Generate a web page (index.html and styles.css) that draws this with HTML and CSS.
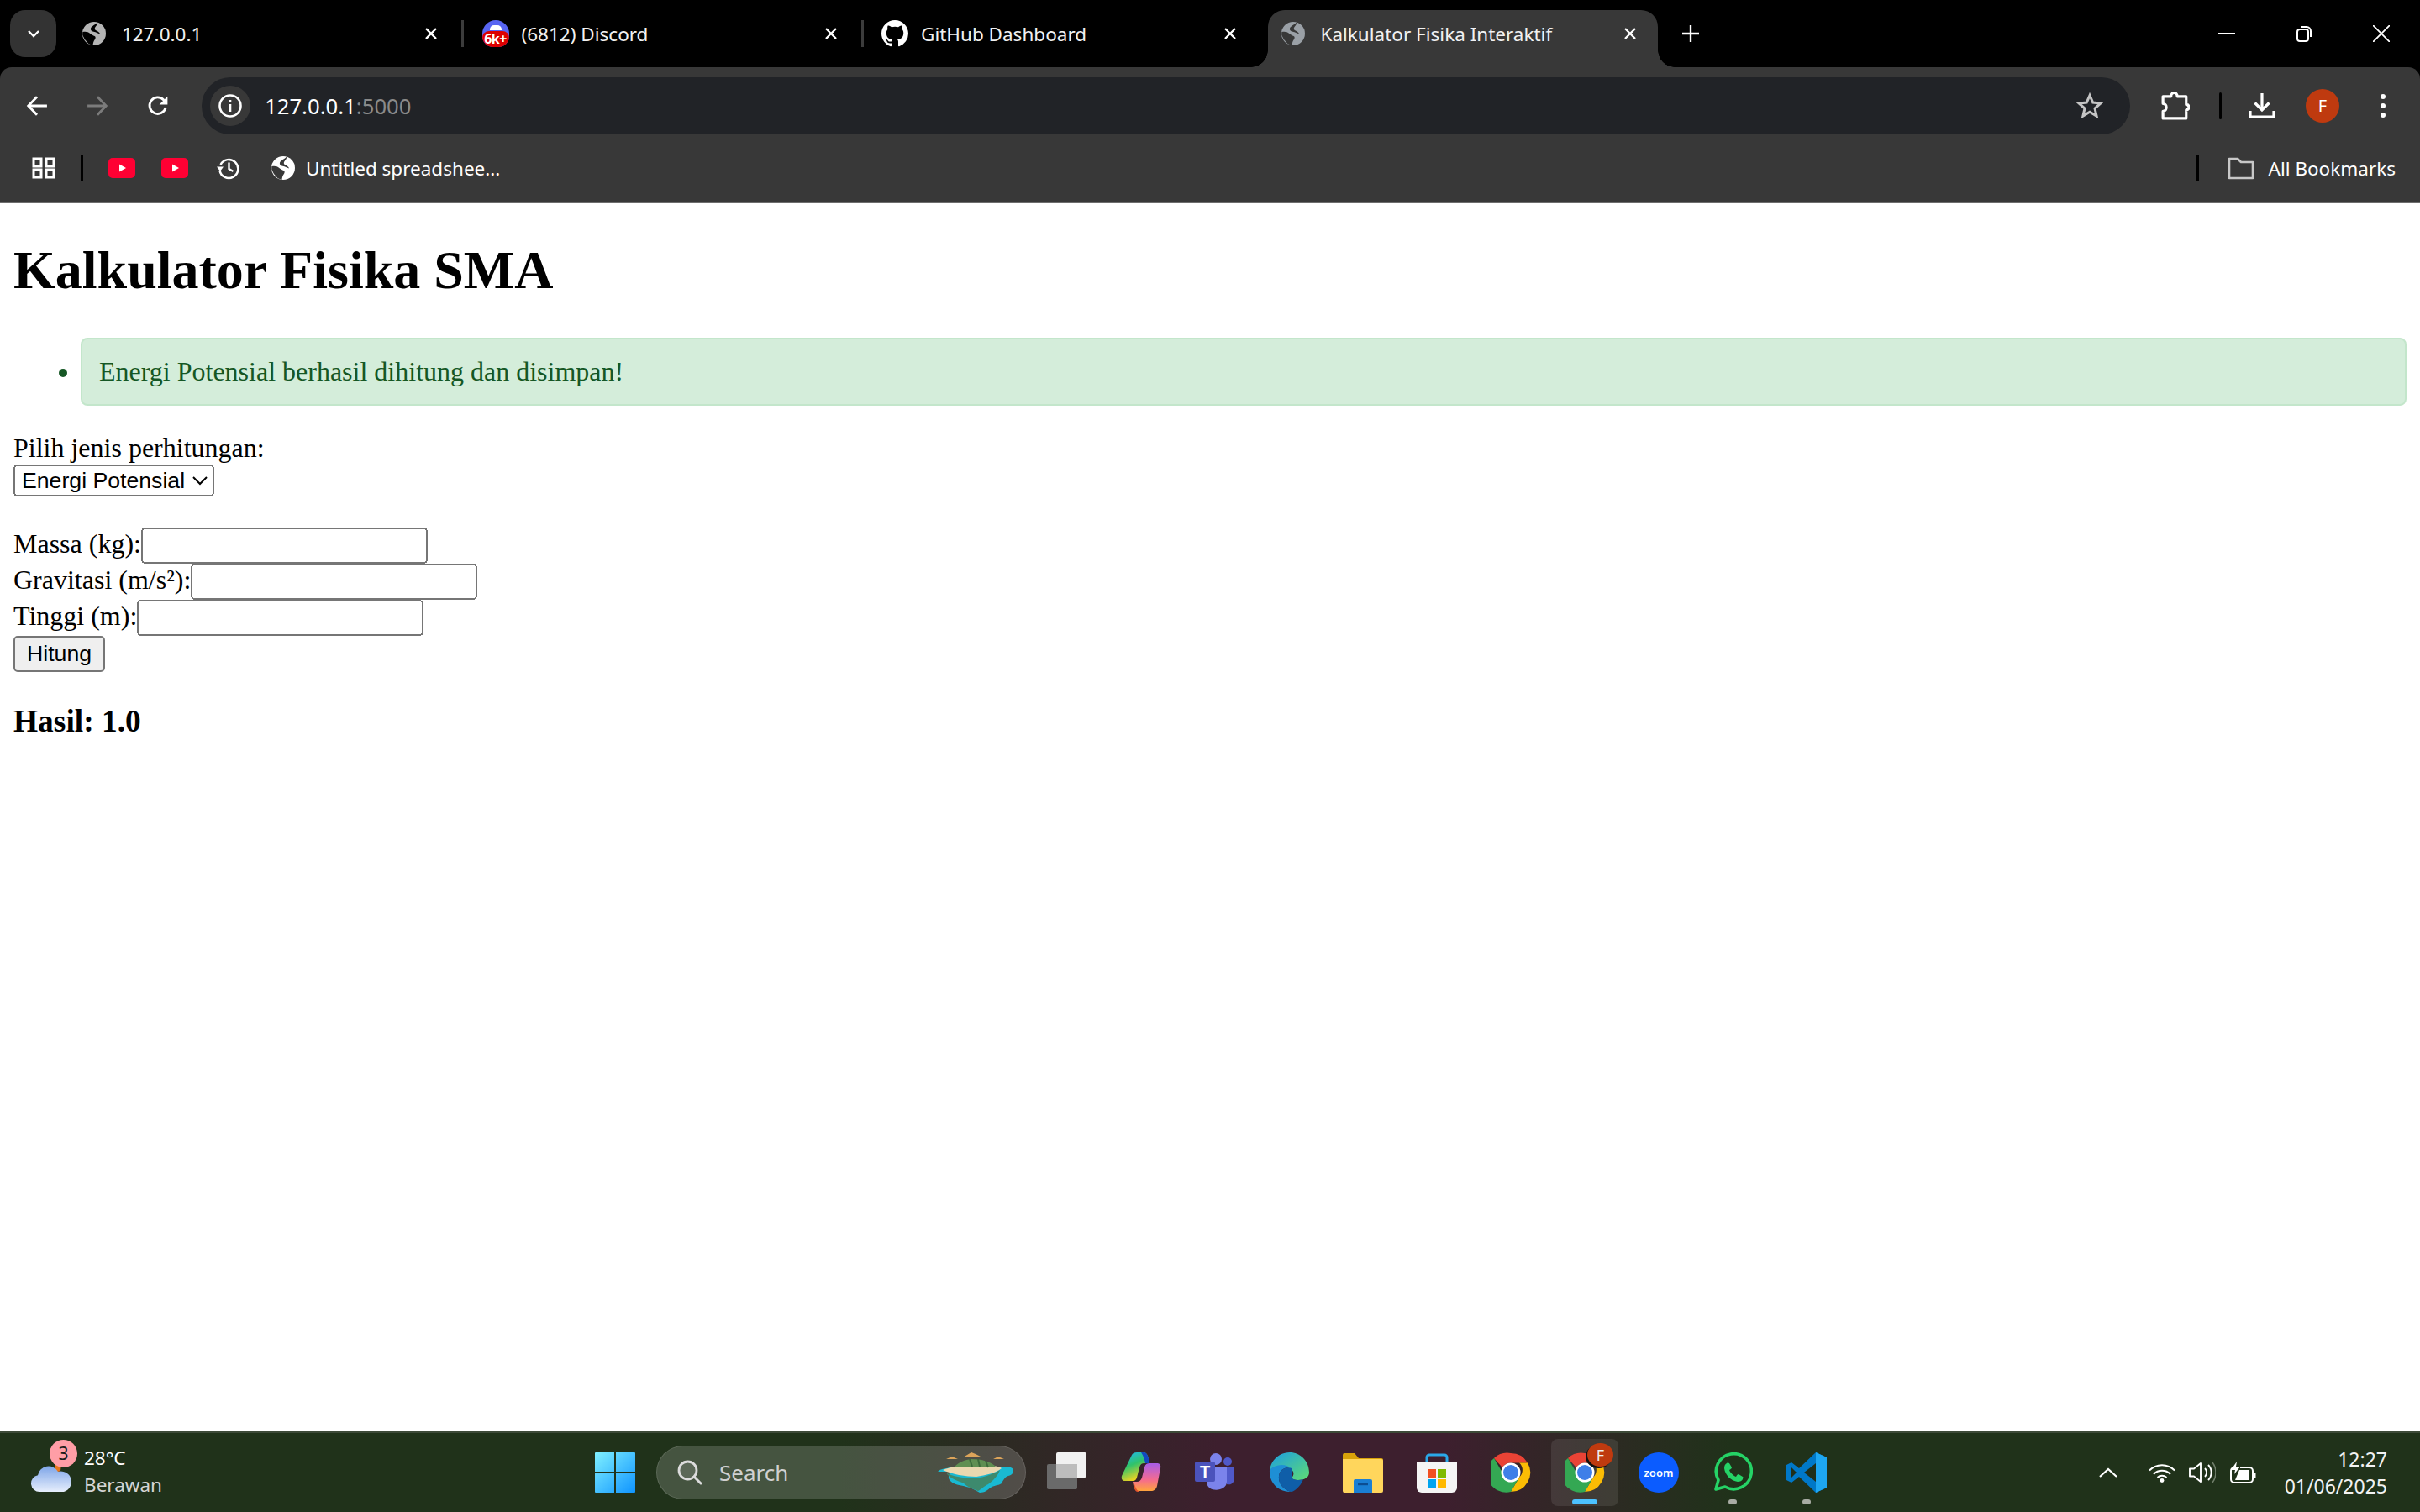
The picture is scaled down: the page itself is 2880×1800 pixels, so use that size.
FILE: index.html
```html
<!DOCTYPE html>
<html lang="en">
<head>
	<meta charset="UTF-8">
	<title>Kalkulator Fisika Interaktif</title>
	<link rel="stylesheet" href="styles.css">
</head>
<body>
	<svg class="defs" width="0" height="0">
		<symbol id="globe" viewBox="0 0 24 24">
			<circle cx="12" cy="12" r="12" fill="currentColor"/>
			<path class="land" d="M15.500.4C13.500 3 9.500 4 8.600 6.500c-.6 1.800.6 3.200 3 3.600 2.500.4 4 1.600 6.500 2.400-.5-2.200-3-3-4.500-4-1.500-1-1-2.500.2-4 1-1.300 2-2.500 1.700-4.100zM.2 10.500c3-.8 5.800-.2 7.800 1.500 1.500 1.300 3 2 4.500 2.500 1.500.7 1 2.500 0 4-1 1.300-1.500 3-1.800 5.500l-4.200-1.500-4-4.500-2.300-4.500z"/>
		</symbol>
		<symbol id="close" viewBox="0 0 16 16">
			<path d="M2 2l12 12M14 2L2 14" fill="none" stroke="currentColor" stroke-width="2.400"/>
		</symbol>
		<symbol id="yt" viewBox="0 0 32 24">
			<rect width="32" height="24" rx="5" fill="#ff0033"/>
			<path d="M13 7.500l8 4.500-8 4.500z" fill="#fff"/>
		</symbol>
		<symbol id="chrome" viewBox="0 0 48 48">
			<path d="M24 1a23 23 0 0 1 20 11.500H24a11.500 11.500 0 0 0-10 5.800L4 6.900A23 23 0 0 1 24 1z" fill="#ea4335"/>
			<path d="M44 12.500A23 23 0 0 1 24 47l10-17.300a11.500 11.500 0 0 0 0-17.200z" fill="#fbbc04"/>
			<path d="M4 6.900l10 17.300A11.500 11.500 0 0 0 34 29.700L24 47A23 23 0 0 1 4 6.900z" fill="#34a853"/>
			<circle cx="24" cy="24" r="11.500" fill="#fff"/>
			<circle cx="24" cy="24" r="9" fill="#3f7fe8"/>
		</symbol>
	</svg>

	<div class="app">
		<header class="browser">
			<div class="tabstrip">
				<button class="tab-search">
					<svg class="chev" viewBox="0 0 16 10"><path d="M2 2l6 6 6-6" fill="none" stroke="#fff" stroke-width="2.400"/></svg>
				</button>
				<div class="tab">
					<span class="fav-slot"><svg class="fav-globe fav-gray"><use href="#globe"/></svg></span>
					<span class="tab-title">127.0.0.1</span>
					<svg class="tab-close"><use href="#close"/></svg>
				</div>
				<div class="tab">
					<span class="discord">
						<span class="discord-top"></span>
						<span class="discord-badge">6k+</span>
					</span>
					<span class="tab-title">(6812) Discord</span>
					<svg class="tab-close"><use href="#close"/></svg>
				</div>
				<div class="tab">
					<svg class="favicon" viewBox="0 0 16 16"><path fill="#fff" d="M8 0C3.580 0 0 3.580 0 8c0 3.540 2.290 6.530 5.470 7.590.4.070.55-.17.55-.38 0-.19-.01-.82-.01-1.490-2.010.37-2.530-.49-2.690-.94-.09-.23-.48-.94-.82-1.130-.28-.15-.68-.52-.01-.53.63-.01 1.080.58 1.230.82.72 1.210 1.870.87 2.330.66.07-.52.28-.87.51-1.070-1.780-.2-3.640-.89-3.640-3.950 0-.87.31-1.590.82-2.150-.08-.2-.36-1.020.08-2.120 0 0 .67-.21 2.200.82.64-.18 1.320-.27 2-.27.68 0 1.360.09 2 .27 1.530-1.040 2.200-.82 2.200-.82.44 1.100.16 1.920.08 2.120.51.56.82 1.270.82 2.150 0 3.070-1.870 3.750-3.650 3.950.29.25.54.73.54 1.480 0 1.070-.01 1.930-.01 2.200 0 .21.15.46.55.38A8.013 8.013 0 0 0 16 8c0-4.420-3.580-8-8-8z"/></svg>
					<span class="tab-title">GitHub Dashboard</span>
					<svg class="tab-close"><use href="#close"/></svg>
				</div>
				<div class="tab active">
					<span class="fav-slot"><svg class="fav-globe fav-blue"><use href="#globe"/></svg></span>
					<span class="tab-title">Kalkulator Fisika Interaktif</span>
					<svg class="tab-close"><use href="#close"/></svg>
				</div>
				<svg class="new-tab" viewBox="0 0 22 22"><path d="M11 0v22M0 11h22" stroke="#fff" stroke-width="2.600"/></svg>
				<div class="win-controls">
					<svg class="win-btn" viewBox="0 0 20 20"><path d="M0 10h20" stroke="#fff" stroke-width="2"/></svg>
					<svg class="win-btn" viewBox="0 0 20 20"><rect x="2" y="5" width="13" height="14" rx="3" fill="none" stroke="#fff" stroke-width="2"/><path d="M6 2h7a5 5 0 0 1 5 5v7" fill="none" stroke="#fff" stroke-width="2"/></svg>
					<svg class="win-btn" viewBox="0 0 20 20"><path d="M0 0l20 20M20 0L0 20" stroke="#fff" stroke-width="1.800"/></svg>
				</div>
			</div>

			<div class="toolbar">
				<span class="tool-btn">
					<svg class="tool-icon" viewBox="0 0 24 24"><path d="M23 12H3M12 2L2.500 12l9.500 10" fill="none" stroke="#fff" stroke-width="2.600"/></svg>
				</span>
				<span class="tool-btn">
					<svg class="tool-icon" viewBox="0 0 24 24"><path d="M1 12h20M12 2l9.500 10L12 22" fill="none" stroke="#7b7b7b" stroke-width="2.600"/></svg>
				</span>
				<span class="tool-btn">
					<svg class="tool-icon" viewBox="0 0 24 24"><path d="M20.500 14a9 9 0 1 1-2.200-8.500L21 8" fill="none" stroke="#fff" stroke-width="2.600"/><path d="M22.500 1.500v9h-9z" fill="#fff"/></svg>
				</span>
				<div class="omnibox">
					<span class="info-chip">
						<svg class="info-icon" viewBox="0 0 28 28"><circle cx="14" cy="14" r="12.500" fill="none" stroke="#fff" stroke-width="2.600"/><path d="M12.700 12h2.600v9h-2.600zM12.700 7h2.600v2.800h-2.600z" fill="#fff"/></svg>
					</span>
					<span class="url">127.0.0.1<span class="url-port">:5000</span></span>
					<svg class="star" viewBox="0 0 32 32"><path d="M16 3.500l3.700 8.600 9.300.8-7 6.100 2.100 9.100-8.100-4.800-8.100 4.800 2.100-9.100-7-6.100 9.300-.8z" fill="none" stroke="#c4c4c4" stroke-width="3"/></svg>
				</div>
				<span class="tool-btn ext-btn">
					<svg class="tool-icon ext-icon" viewBox="0 0 32 32"><path d="M2 5.500h9c0-5.500 7-5.500 7 0h10v9c4 0 4 6 0 6v9.500H2v-8c5 0 5-8.500 0-8.500z" fill="none" stroke="#fff" stroke-width="3" stroke-linejoin="round"/></svg>
				</span>
				<span class="tool-sep"></span>
				<span class="tool-btn dl-btn">
					<svg class="tool-icon dl-icon" viewBox="0 0 32 32"><path d="M16 1v19M7.500 12.500l8.500 8.500 8.500-8.500M2 22v7h28v-7" fill="none" stroke="#fff" stroke-width="3.200"/></svg>
				</span>
				<span class="tool-btn">
					<span class="avatar">F</span>
				</span>
				<span class="tool-btn">
					<svg class="menu-dots" viewBox="0 0 8 30"><circle cx="4" cy="4" r="3" fill="#fff"/><circle cx="4" cy="15" r="3" fill="#fff"/><circle cx="4" cy="26" r="3" fill="#fff"/></svg>
				</span>
			</div>

			<div class="bookmarks">
				<svg class="apps" viewBox="0 0 28 26"><path d="M2 2h9v9H2zM17 2h9v9h-9zM2 15h9v9H2zM17 15h9v9h-9z" fill="none" stroke="#fff" stroke-width="3"/></svg>
				<span class="bm-sep"></span>
				<svg class="yt yt-first"><use href="#yt"/></svg>
				<svg class="yt yt-second"><use href="#yt"/></svg>
				<svg class="history" viewBox="0 0 28 28"><path d="M4.500 10a11 11 0 1 1-1 7" fill="none" stroke="#fff" stroke-width="2.500"/><path d="M0 12.500h8L4 18z" fill="#fff"/><path d="M14.500 7.500v7.500l5 3" fill="none" stroke="#fff" stroke-width="2.400"/></svg>
				<svg class="bm-globe"><use href="#globe"/></svg>
				<span class="bm-title">Untitled spreadshee...</span>
				<span class="bm-sep bm-sep-right"></span>
				<svg class="folder" viewBox="0 0 32 28"><path d="M2 3h10l4 4h14v19H2z" fill="none" stroke="#c8c8c8" stroke-width="2.600" stroke-linejoin="round"/></svg>
				<span class="bm-title bm-all">All Bookmarks</span>
			</div>
		</header>

		<main class="page">
			<h1>Kalkulator Fisika SMA</h1>
			<ul>
				<li class="success">Energi Potensial berhasil dihitung dan disimpan!</li>
			</ul>
			<form>
				<label for="jenis">Pilih jenis perhitungan:</label><br>
				<select id="jenis">
					<option>Energi Potensial</option>
				</select>
				<br><br>
				<label for="massa">Massa (kg):</label><input id="massa" type="text"><br>
				<label for="gravitasi">Gravitasi (m/s²):</label><input id="gravitasi" type="text"><br>
				<label for="tinggi">Tinggi (m):</label><input id="tinggi" type="text"><br>
				<button type="button">Hitung</button>
			</form>
			<h3>Hasil: 1.0</h3>
		</main>

		<footer class="taskbar">
			<div class="weather">
				<span class="weather-icon">
					<svg class="cloud" viewBox="0 0 50 34"><defs><linearGradient id="cl" x1="0" y1="0" x2="0" y2="1"><stop offset="0" stop-color="#7fa6e8"/><stop offset="1" stop-color="#e6eefc"/></linearGradient></defs><path d="M30 0h7l-1 8-6 2z" fill="#e8761c"/><path d="M11 33a10 10 0 0 1-2-19.800A13 13 0 0 1 33 9a11 11 0 0 1 7 24z" fill="url(#cl)"/></svg>
					<span class="weather-badge">3</span>
				</span>
				<span class="weather-text">
					<span class="temp">28°C</span>
					<span class="cond">Berawan</span>
				</span>
			</div>

			<div class="task-center">
				<svg class="win-logo" viewBox="0 0 48 48"><defs><linearGradient id="wl" x1="0" y1="0" x2="1" y2="1"><stop offset="0" stop-color="#7ff0ff"/><stop offset="1" stop-color="#0f94ff"/></linearGradient></defs><path d="M0 1a1 1 0 0 1 1-1h22v23H0zM25 0h22a1 1 0 0 1 1 1v22H25zM0 25h23v23H1a1 1 0 0 1-1-1zM25 25h23v22a1 1 0 0 1-1 1H25z" fill="url(#wl)"/></svg>

				<div class="searchbox">
					<svg class="search-icon" viewBox="0 0 30 30"><circle cx="12.500" cy="12.500" r="10.500" fill="rgba(255,255,255,.12)" stroke="#dcdcdc" stroke-width="2.800"/><path d="M20 20l8 8" stroke="#dcdcdc" stroke-width="3" stroke-linecap="round"/></svg>
					<span class="search-text">Search</span>
					<svg class="island" viewBox="0 0 90 50">
						<path d="M10 9l7-3 7 3zM30 7l10-6 5 2 8 4zM66 9l6-3 7 3z" fill="#dca45a"/>
						<path d="M0 24c4-4 8-3 14-5l62-1c5 1 10-1 14 3 1 5-3 7-6 8-4 1-6 5-8 9-5 3-9 2-13 5-4 3-7 6-13 6-6-3-10-6-16-7-6-2-14-2-19-7-4-4-1-7-1-11z" fill="#19b9d2"/>
						<path d="M10 25c6 5 22 6 28 7 14 0 26-4 36-10-2 6-8 13-14 17-6 3-8 6-12 8-7-3-13-5-17-9-6-3-18-6-21-13z" fill="#3d8a6e"/>
						<path d="M6 22c14-7 62-9 70-2-7 6-19 8-30 10-12 0-30-3-40-8z" fill="#ead8b0"/>
						<path d="M20 18c6-6 12-8 20-9 12 0 24 3 30 10-16-1-36 0-50-1z" fill="#5f8f52"/>
						<path d="M38 9l3 9M48 9l2 9M57 11l3 8" stroke="#3c6b3b" stroke-width="2"/>
					</svg>
				</div>

				<div class="task-icons">
					<span class="task-item">
						<svg class="task-icon" viewBox="0 0 48 48"><rect x="0" y="14" width="36" height="30" rx="2" fill="#6a6a6a"/><rect x="11" y="0" width="36" height="30" rx="2" fill="#f1f1f1"/><path d="M11 14h25v16H11z" fill="#bdbdbd"/></svg>
					</span>
					<span class="task-item">
						<svg class="task-icon" viewBox="0 0 48 48"><defs><linearGradient id="cp1" x1="0" y1="0" x2=".4" y2="1"><stop offset="0" stop-color="#1fb6ff"/><stop offset=".5" stop-color="#2fc36b"/><stop offset="1" stop-color="#f4d320"/></linearGradient><linearGradient id="cp2" x1=".5" y1="0" x2=".5" y2="1"><stop offset="0" stop-color="#a85de8"/><stop offset=".6" stop-color="#f56c8e"/><stop offset="1" stop-color="#ffa53d"/></linearGradient></defs><path d="M13 3c1-2 3-3 6-3h9c3 1 4 4 5 7l1 6h-6c-3 0-5 1-6 5l-3 12c-1 3-3 4-5 4H5c-3 0-5-2-4-6z" fill="url(#cp1)"/><path d="M35 13h8c3 0 5 2 4 6l-4 21c-1 4-4 6-7 6H21c-3 0-5-2-6-6l-1-5h5c3 0 5-2 6-5l3-12c1-4 3-5 7-5z" fill="url(#cp2)"/><path d="M28 0c3 1 4 4 5 7l1 6h-5c-1-4-2-9-5-13z" fill="#1348c0"/><path d="M15 35c2 5 3 10 7 12h-2c-3 0-5-4-5-12z" fill="#e2542e"/></svg>
					</span>
					<span class="task-item">
						<svg class="task-icon" viewBox="0 0 48 48"><circle cx="25" cy="8" r="7" fill="#7b83eb"/><circle cx="39" cy="11" r="5" fill="#5059c9"/><path d="M34 18h13v14a7 7 0 0 1-9 6z" fill="#5059c9"/><path d="M14 18h24v17c0 12-24 14-24 0z" fill="#7b83eb"/><rect x="0" y="11" width="24" height="24" rx="2" fill="#4b53bc"/><text class="teams-t" x="12" y="30">T</text></svg>
					</span>
					<span class="task-item">
						<svg class="task-icon" viewBox="0 0 48 48"><defs><linearGradient id="ed1" x1="0" y1="0" x2="1" y2="1"><stop offset="0" stop-color="#1b9de2"/><stop offset="1" stop-color="#5fdc73"/></linearGradient></defs><path d="M1 21C3 8 13 0 25 0c12 0 23 10 23 24 0 6-6 9-13 9-4 0-8-1-8-3 2-1 3-4 2-7-4-7-20-9-28-2z" fill="url(#ed1)"/><path d="M1 21c7-7 18-8 26-2-8-3-16 3-15 12 0 7 6 14 15 16C12 48 0 37 1 21z" fill="#1e8fd5"/><path d="M12 31c-1-9 7-15 15-12 2 1 1 8 0 11 2 3 8 4 14 2-3 9-12 15-14 15-9-2-15-9-15-16z" fill="#0f5ea8"/></svg>
					</span>
					<span class="task-item">
						<svg class="task-icon" viewBox="0 0 48 48"><path d="M0 3a2 2 0 0 1 2-2h12l5 6h27a2 2 0 0 1 2 2v5H0z" fill="#d8a20a"/><path d="M0 8h46a2 2 0 0 1 2 2v36a2 2 0 0 1-2 2H2a2 2 0 0 1-2-2z" fill="#ffd65c"/><path d="M13 34a2 2 0 0 1 2-2h18a2 2 0 0 1 2 2v14H13z" fill="#1a7fd4"/><path d="M18 38h12" stroke="#0c4d92" stroke-width="2.400"/></svg>
					</span>
					<span class="task-item">
						<svg class="task-icon" viewBox="0 0 48 48"><path d="M12 12V6a3 3 0 0 1 3-3h18a3 3 0 0 1 3 3v6" fill="none" stroke="#2aa8e8" stroke-width="3"/><path d="M0 11h48v31a6 6 0 0 1-6 6H6a6 6 0 0 1-6-6z" fill="#f5f5f5"/><path d="M13 20h10v10H13z" fill="#f25022"/><path d="M25 20h10v10H25z" fill="#7fba00"/><path d="M13 32h10v10H13z" fill="#00a4ef"/><path d="M25 32h10v10H25z" fill="#ffb900"/></svg>
					</span>
					<span class="task-item">
						<svg class="task-icon"><use href="#chrome"/></svg>
					</span>
					<span class="task-item is-active">
						<svg class="task-icon"><use href="#chrome"/></svg>
						<span class="chrome-badge">F</span>
						<span class="indicator"></span>
					</span>
					<span class="task-item">
						<span class="zoom-app">zoom</span>
					</span>
					<span class="task-item has-dot">
						<svg class="task-icon" viewBox="0 0 48 48"><path d="M4 44l3-11A21 21 0 1 1 15 41z" fill="none" stroke="#25d366" stroke-width="3.600" stroke-linejoin="round"/><path d="M17 13c-2 1-3 3-3 6 1 8 8 15 16 16 3 0 5-1 6-3 0-1 1-3 0-3l-5-3c-1 0-2 1-3 3-3-1-7-5-8-8 2-1 3-2 3-3l-3-5c0 0-2-1-3 0z" fill="#25d366"/></svg>
						<span class="dot"></span>
					</span>
					<span class="task-item has-dot">
						<svg class="task-icon" viewBox="0 0 48 48"><path d="M35 0l13 6v36l-13 6-20-19-9 7-6-3V15l6-3 9 7z" fill="#0078c8"/><path d="M35 0l13 6v36l-13 6z" fill="#1ea7f2"/><path d="M6 18l-0 12 6-6z" fill="#1f2f1a"/><path d="M35 13v22L21 24z" fill="#1f2f1a"/></svg>
						<span class="dot"></span>
					</span>
				</div>
			</div>

			<div class="tray">
				<svg class="tray-chev" viewBox="0 0 22 12"><path d="M1 11l10-9 10 9" fill="none" stroke="#fff" stroke-width="2.200"/></svg>
				<svg class="tray-wifi" viewBox="0 0 32 23"><path d="M1 8.500a21 21 0 0 1 30 0M6 13a14 14 0 0 1 20 0M10.500 17a8 8 0 0 1 11 0" fill="none" stroke="#fff" stroke-width="1.900"/><circle cx="16" cy="20.500" r="2.400" fill="#fff"/></svg>
				<svg class="tray-sound" viewBox="0 0 32 26"><path d="M1 8.500h5l8-6.500v22l-8-6.500H1z" fill="none" stroke="#fff" stroke-width="1.900" stroke-linejoin="round"/><path d="M19 8a7 7 0 0 1 0 10M23 4a13 13 0 0 1 0 18" fill="none" stroke="#fff" stroke-width="1.900"/><path d="M28 1a20 20 0 0 1 0 24" fill="none" stroke="#6f7d6a" stroke-width="1.600"/></svg>
				<svg class="tray-batt" viewBox="0 0 32 27"><path d="M9 7H6a4 4 0 0 0-4 4v10a4 4 0 0 0 4 4h18a4 4 0 0 0 4-4V11a4 4 0 0 0-4-4H13" fill="none" stroke="#fff" stroke-width="2"/><path d="M29.500 13h2v6h-2z" fill="#fff"/><path d="M12 10h12v12H7z" fill="#fff"/><path d="M9 0L2 10h5l-1 5 7-9H8z" fill="#fff"/></svg>
				<div class="clock">
					<span>12:27</span>
					<span>01/06/2025</span>
				</div>
			</div>
		</footer>
	</div>
</body>
</html>
```

FILE: styles.css
```css
*{
	box-sizing: border-box;
}
html, body{
	margin: 0;
	padding: 0;
}
.defs{
	position: absolute;
}
.app{
	width: 2880px;
	height: 1800px;
	display: flex;
	flex-direction: column;
	overflow: hidden;
	font-family: "Noto Sans", "Open Sans", sans-serif;
}

/* browser frame */
.browser{
	flex: none;
	background: #000;
	color: #fff;
}
.tabstrip{
	height: 80px;
	display: flex;
	align-items: flex-end;
	padding-left: 12px;
}
.tab-search{
	width: 55px;
	height: 56px;
	margin: 0 15px 12px 0;
	padding: 0;
	border: 0;
	border-radius: 18px;
	background: #333;
	display: flex;
	align-items: center;
	justify-content: center;
}
.chev{
	width: 16px;
	height: 10px;
}
.tab{
	position: relative;
	width: 464px;
	height: 68px;
	margin-right: 11.500px;
	padding: 0 25px 12px 16px;
	display: flex;
	align-items: center;
	border-radius: 20px 20px 0 0;
}
.tab::after{
	content: "";
	position: absolute;
	right: -6px;
	top: 12px;
	width: 3px;
	height: 32px;
	background: #3c3c3c;
}
.tab:nth-of-type(3)::after{
	display: none;
}
.tab.active{
	background: #383838;
	margin-right: 29px;
}
.tab.active::before{
	content: "";
	position: absolute;
	left: -20px;
	bottom: 0;
	width: 20px;
	height: 20px;
	background: radial-gradient(circle at 0 0, transparent 19.500px, #383838 20px);
}
.tab.active::after{
	right: -20px;
	top: auto;
	bottom: 0;
	width: 20px;
	height: 20px;
	background: radial-gradient(circle at 100% 0, transparent 19.500px, #383838 20px);
}
.favicon, .fav-slot{
	width: 32px;
	height: 32px;
	flex: none;
}
.fav-slot{
	display: flex;
	align-items: center;
	justify-content: flex-start;
}
.fav-globe{
	width: 28px;
	height: 28px;
}
.fav-gray{
	color: #b5b5b5;
	--land: #000;
}
.fav-blue{
	color: #9aa0a6;
	--land: #383838;
}
.land{
	fill: var(--land, #383838);
}
.tab-title{
	flex: 1;
	margin-left: 15px;
	font-size: 22.500px;
	white-space: nowrap;
	color: #f1f1f1;
}
.tab-close{
	width: 16px;
	height: 16px;
	flex: none;
	color: #fff;
}
.discord{
	position: relative;
	width: 32px;
	height: 32px;
	flex: none;
	border-radius: 50% 50% 40% 40%;
	overflow: hidden;
	background: #5865f2;
}
.discord-top{
	position: absolute;
	left: 9px;
	top: 6px;
	width: 14px;
	height: 6px;
	border-radius: 5px 5px 0 0;
	background: #fff;
}
.discord-badge{
	position: absolute;
	left: 0;
	right: 0;
	bottom: 0;
	height: 19px;
	background: #dc0000;
	border-radius: 8px;
	font-size: 16px;
	font-weight: 700;
	line-height: 19px;
	text-align: center;
	color: #fff;
	letter-spacing: -.5px;
}
.new-tab{
	width: 20px;
	height: 20px;
	margin: 0 0 30px 0;
	flex: none;
}
.win-controls{
	margin-left: auto;
	display: flex;
	align-items: center;
	height: 80px;
	gap: 72px;
	padding: 0 36px 0 0;
	align-self: flex-start;
}
.win-btn{
	width: 20px;
	height: 20px;
}

.toolbar{
	height: 80px;
	background: #383838;
	border-radius: 14px 14px 0 0;
	display: flex;
	align-items: center;
	padding: 12px 8px 0;
}
.tool-btn{
	width: 72px;
	height: 40px;
	flex: none;
	display: flex;
	align-items: center;
	justify-content: center;
}
.tool-icon{
	width: 26px;
	height: 26px;
}
.omnibox{
	width: 2295px;
	height: 68px;
	margin-left: 16px;
	padding: 0 32px 0 10px;
	flex: none;
	display: flex;
	align-items: center;
	border-radius: 34px;
	background: #212327;
}
.info-chip{
	width: 48px;
	height: 48px;
	flex: none;
	border-radius: 50%;
	background: #383838;
	display: flex;
	align-items: center;
	justify-content: center;
}
.info-icon{
	width: 28px;
	height: 28px;
}
.url{
	margin-left: 17px;
	font-size: 25.700px;
	color: #fff;
}
.url-port{
	color: #8a8a8a;
}
.star{
	margin-left: auto;
	width: 32px;
	height: 32px;
}
.ext-btn{
	margin-left: 18px;
}
.ext-icon{
	width: 34px;
	height: 34px;
}
.tool-sep{
	width: 3px;
	height: 32px;
	margin: 0 0 0 16px;
	flex: none;
	background: #000;
	border-radius: 2px;
}
.dl-btn{
	margin-left: 12px;
}
.dl-icon{
	width: 32px;
	height: 32px;
}
.avatar{
	width: 40px;
	height: 40px;
	border-radius: 50%;
	background: #bf3a0f;
	color: #fff;
	font-size: 20px;
	line-height: 40px;
	text-align: center;
}
.menu-dots{
	width: 8px;
	height: 30px;
}

.bookmarks{
	height: 82px;
	background: #383838;
	border-bottom: 2px solid #6e6e6e;
	display: flex;
	align-items: center;
	padding: 0 29px 0 38px;
}
.apps{
	width: 28px;
	height: 26px;
	flex: none;
}
.bm-sep{
	width: 3px;
	height: 32px;
	margin-left: 30px;
	flex: none;
	background: #000;
}
.yt{
	width: 32px;
	height: 24px;
	flex: none;
}
.yt-first{
	margin-left: 30px;
}
.yt-second{
	margin-left: 31px;
}
.history{
	width: 28px;
	height: 28px;
	margin-left: 34px;
	flex: none;
}
.bm-globe{
	width: 28px;
	height: 28px;
	margin-left: 37px;
	flex: none;
	color: #fff;
}
.bm-title{
	margin-left: 13px;
	font-size: 22.500px;
	color: #fff;
	white-space: nowrap;
}
.bm-sep-right{
	margin-left: auto;
}
.folder{
	width: 32px;
	height: 28px;
	margin-left: 34px;
	flex: none;
}
.bm-all{
	margin-left: 17px;
}

/* page */
.page{
	flex: 1;
	zoom: 2;
	padding: 0 8px;
	background: #fff;
	color: #000;
	font-family: "Liberation Serif", serif;
	font-size: 16px;
}
.page ul{
	margin: 16px 0;
}
.success{
	padding: 10px;
	border: 1px solid #c3e6cb;
	border-radius: 4px;
	background: #d4edda;
	color: #155724;
}
.page select, .page input, .page button{
	font-family: "Liberation Sans", sans-serif;
}
.page input{
	width: 170.500px;
}

/* taskbar */
.taskbar{
	flex: none;
	height: 96px;
	border-top: 2px solid #3d4a38;
	background: linear-gradient(90deg, #20321a 0, #20321a 1000px, #3d1f2e 1450px, #3d1f2e 1720px, #20321a 2060px, #20321a 100%);
	color: #fff;
	display: flex;
	align-items: center;
}
.weather{
	width: 708px;
	flex: none;
	display: flex;
	align-items: center;
	padding-left: 36px;
}
.weather-icon{
	position: relative;
	width: 50px;
	height: 62px;
	margin-bottom: 14px;
	flex: none;
	display: flex;
	align-items: flex-end;
}
.cloud{
	width: 50px;
	height: 34px;
}
.weather-badge{
	position: absolute;
	left: 23px;
	top: -1px;
	width: 33px;
	height: 33px;
	border-radius: 50%;
	background: #ff9ea6;
	color: #1c1c1c;
	font-size: 21px;
	line-height: 33px;
	text-align: center;
}
.weather-text{
	margin: 0 0 3px 14px;
	display: flex;
	flex-direction: column;
	font-size: 22.500px;
	line-height: 32px;
}
.cond{
	color: #d5d5d5;
}
.task-center{
	display: flex;
	align-items: center;
	flex: none;
}
.win-logo{
	width: 48px;
	height: 48px;
	flex: none;
}
.searchbox{
	width: 440px;
	height: 64px;
	margin-left: 25px;
	padding: 0 14px 0 24px;
	flex: none;
	display: flex;
	align-items: center;
	border-radius: 32px;
	border: 1px solid rgba(255,255,255,.12);
	background: rgba(255,255,255,.17);
}
.search-icon{
	width: 30px;
	height: 30px;
	flex: none;
}
.search-text{
	margin-left: 20px;
	font-size: 26px;
	color: #d0d0d0;
}
.island{
	margin-left: auto;
	width: 90px;
	height: 50px;
}
.task-icons{
	margin-left: 5px;
	display: flex;
}
.task-item{
	position: relative;
	width: 88px;
	height: 80px;
	flex: none;
	display: flex;
	align-items: center;
	justify-content: center;
}
.task-icon{
	width: 48px;
	height: 48px;
}
.teams-t{
	font-family: "Liberation Sans", sans-serif;
	font-size: 20px;
	font-weight: 700;
	fill: #fff;
	text-anchor: middle;
}
.is-active::before{
	content: "";
	position: absolute;
	left: 4px;
	right: 4px;
	top: 0;
	bottom: 0;
	border-radius: 8px;
	background: rgba(255,255,255,.09);
}
.is-active .task-icon{
	position: relative;
}
.chrome-badge{
	position: absolute;
	left: 47px;
	top: 5px;
	width: 31px;
	height: 28px;
	border-radius: 50%;
	background: #bf3a0f;
	box-shadow: -2px 2px 0 #111;
	color: #eee;
	font-size: 18px;
	line-height: 28px;
	text-align: center;
}
.indicator{
	position: absolute;
	left: 29px;
	bottom: 2px;
	width: 30px;
	height: 6px;
	border-radius: 3px;
	background: #4cc2ff;
}
.dot{
	position: absolute;
	left: 39px;
	bottom: 2px;
	width: 10px;
	height: 6px;
	border-radius: 3px;
	background: #a8aca4;
}
.zoom-app{
	width: 48px;
	height: 48px;
	border-radius: 50%;
	background: #0b5cff;
	color: #fff;
	font-size: 13px;
	font-weight: 600;
	line-height: 48px;
	text-align: center;
}
.tray{
	margin-left: auto;
	padding-right: 39px;
	display: flex;
	align-items: center;
}
.tray-chev{
	width: 22px;
	height: 12px;
}
.tray-wifi{
	width: 32px;
	height: 23px;
	margin-left: 37px;
}
.tray-sound{
	width: 32px;
	height: 26px;
	margin-left: 16px;
}
.tray-batt{
	width: 32px;
	height: 27px;
	margin-left: 16px;
}
.clock{
	margin-left: 34px;
	display: flex;
	flex-direction: column;
	align-items: flex-end;
	font-size: 23px;
	line-height: 32px;
	color: #f2f2f2;
}
```
